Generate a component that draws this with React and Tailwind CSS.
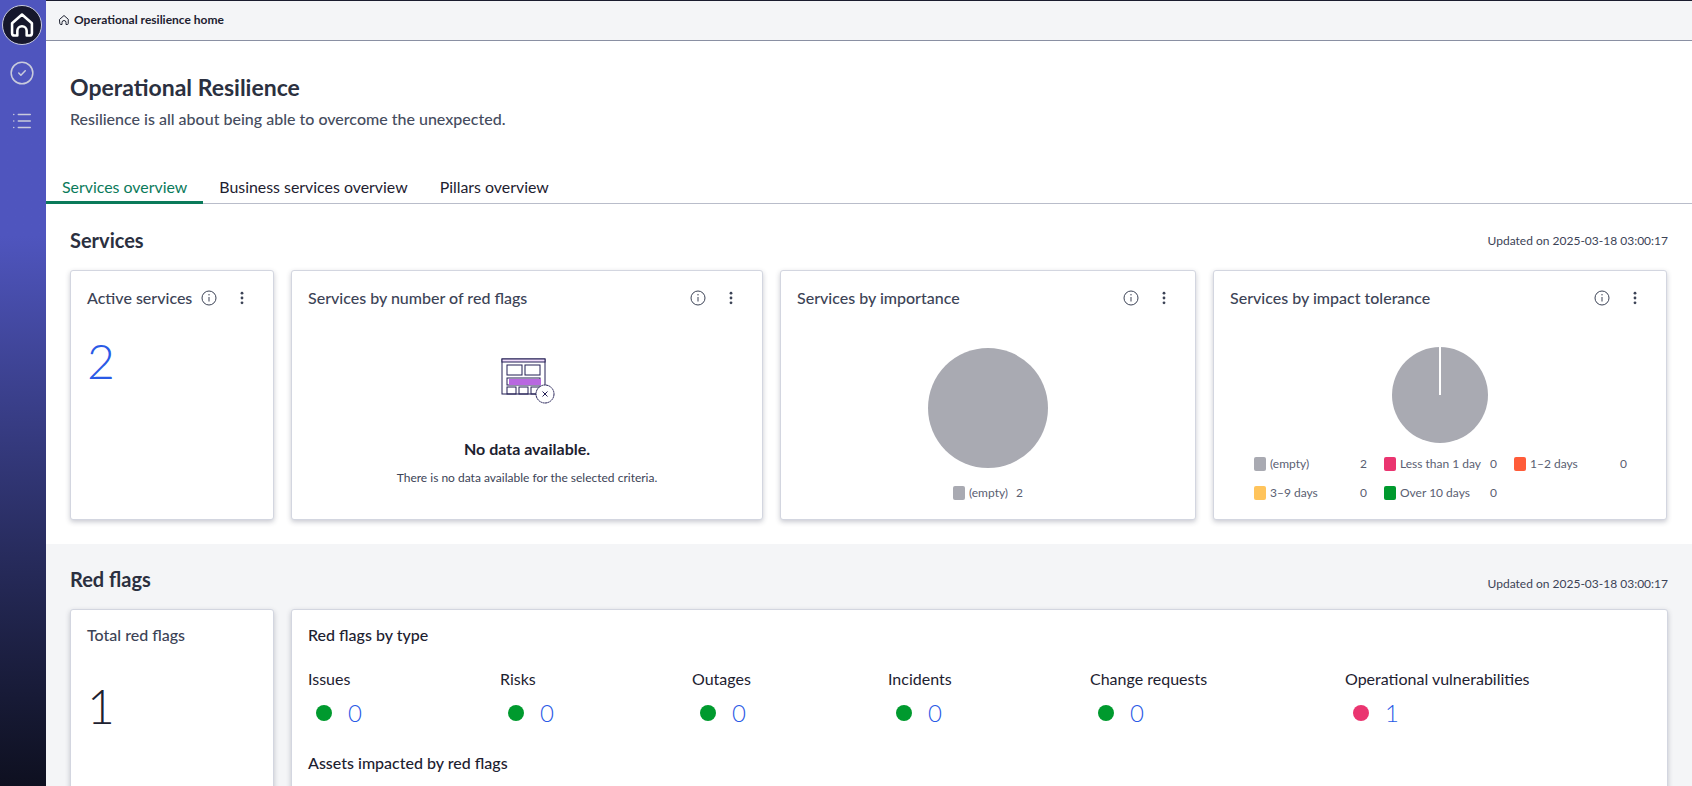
import React from "react";
import { CircleCheck, List } from "lucide-react";

const HomeGlyph = ({ className, strokeWidth = 2 }) => (
  <svg viewBox="0 0 24 24" fill="none" stroke="currentColor" strokeWidth={strokeWidth} strokeLinejoin="round" strokeLinecap="round" className={className}>
    <path d="M3.5 10.5 12 3l8.5 7.5V19a2 2 0 0 1-2 2H16v-4a4 4 0 0 0-8 0v4H5.5a2 2 0 0 1-2-2z" />
  </svg>
);

const InfoIcon = () => (
  <svg viewBox="0 0 16 16" fill="none" className="w-[16px] h-[16px] text-[#3c4356]">
    <circle cx="8" cy="8" r="7" stroke="currentColor" strokeWidth="1" />
    <path d="M8 7v4.5" stroke="currentColor" strokeWidth="1" />
    <circle cx="8" cy="4.8" r="0.7" fill="currentColor" />
  </svg>
);

const Dots = () => (
  <svg viewBox="0 0 4 16" className="w-[4px] h-[14px] text-[#3c4356]" fill="currentColor">
    <circle cx="2" cy="2.5" r="1.6" />
    <circle cx="2" cy="8" r="1.6" />
    <circle cx="2" cy="13.5" r="1.6" />
  </svg>
);

const CardHeader = ({ title }) => (
  <div className="flex items-center h-6 pl-4 pr-[29px]">
    <span className="flex-1 text-[16px] font-medium text-[#3c4356] whitespace-nowrap">{title}</span>
    <InfoIcon />
    <span className="ml-[23px]"><Dots /></span>
  </div>
);

const Card = ({ className, children }) => (
  <div className={`bg-white border border-[#d3d6e0] rounded-[3px] shadow-[0_2px_5px_rgba(40,45,70,0.25)] ${className}`}>
    {children}
  </div>
);

const NoData = () => (
  <svg viewBox="0 0 56 46" className="w-[56px] h-[46px]" fill="none">
    <rect x="1" y="1" width="43" height="35" fill="#fff" stroke="#231f55" strokeWidth="1" />
    <rect x="1" y="1" width="43" height="3" fill="#f0dcfa" stroke="#231f55" strokeWidth="1" />
    <rect x="6" y="7" width="15" height="10" stroke="#231f55" strokeWidth="1" />
    <rect x="24" y="7" width="15" height="10" stroke="#231f55" strokeWidth="1" />
    <rect x="6" y="20" width="33" height="7" stroke="#231f55" strokeWidth="1" />
    <rect x="8" y="21" width="32" height="6" fill="#b868e0" />
    <rect x="6" y="29" width="9" height="7" stroke="#231f55" strokeWidth="1" />
    <rect x="18" y="29" width="9" height="7" stroke="#231f55" strokeWidth="1" />
    <rect x="30" y="29" width="9" height="7" stroke="#231f55" strokeWidth="1" />
    <circle cx="44" cy="36" r="9" fill="#fff" stroke="#231f55" strokeWidth="1" strokeDasharray="2 0.4" />
    <path d="M41.5 33.5l5 5m0-5l-5 5" stroke="#231f55" strokeWidth="1" />
  </svg>
);

const Legend = ({ color, label, value }) => (
  <div className="flex items-center text-[12px] text-[#5a6072]">
    <span className={`w-[12px] h-[14px] rounded-[2px] mr-[4px] ${color}`} />
    <span className="w-[90px] whitespace-nowrap">{label}</span>
    <span>{value}</span>
  </div>
);

const flagTypes = [
  { label: "Issues", value: "0", width: "w-[192px]", dot: "bg-[#009a2e]" },
  { label: "Risks", value: "0", width: "w-[192px]", dot: "bg-[#009a2e]" },
  { label: "Outages", value: "0", width: "w-[196px]", dot: "bg-[#009a2e]" },
  { label: "Incidents", value: "0", width: "w-[202px]", dot: "bg-[#009a2e]" },
  { label: "Change requests", value: "0", width: "w-[255px]", dot: "bg-[#009a2e]" },
  { label: "Operational vulnerabilities", value: "1", width: "w-[240px]", dot: "bg-[#ea3570]" },
];

const SectionHead = ({ title, stampClass }) => (
  <div className="flex items-center justify-between h-7">
    <h2 className="text-[20px] font-bold text-[#2b3040]">{title}</h2>
    <span className={`text-[12px] text-[#3c4356] ${stampClass}`}>Updated on 2025-03-18 03:00:17</span>
  </div>
);

export default function App() {
  return (
    <div className="flex h-screen overflow-hidden bg-white font-['Lato',sans-serif]">
      <aside className="w-[46px] shrink-0 pr-[2px] flex flex-col items-center bg-linear-to-b from-[#4f55be] from-[30%] to-[#0e1020]">
        <div className="mt-[5px] w-10 h-10 shrink-0 rounded-full bg-[#16172c] border border-[#c9cbe0] flex items-center justify-center text-white">
          <HomeGlyph className="w-[28px] h-[28px]" strokeWidth={2.2} />
        </div>
        <CircleCheck className="mt-[15px] w-[26px] h-[26px] text-[#c9cbdc]" strokeWidth={1.4} />
        <List className="mt-[24px] w-[22px] h-[22px] text-[#c9cbdc]" strokeWidth={1.7} />
      </aside>

      <div className="flex-1 min-w-0 flex flex-col">
        <header className="h-[41px] shrink-0 flex items-center pl-[12px] pb-[2px] bg-[#f4f5f7] border-t border-t-[#1a1c2e] border-b border-b-[#8a90a3]">
          <HomeGlyph className="w-[12px] h-[12px] mr-[4px] text-[#1d2130]" strokeWidth={2} />
          <span className="text-[12px] font-bold text-[#1d2130]">Operational resilience home</span>
        </header>

        <div className="px-6 pt-[30px]">
          <h1 className="text-[23px] leading-8 font-bold text-[#2b3040]">Operational Resilience</h1>
          <p className="mt-[4px] text-[16px] leading-6 font-medium text-[#454c5e]">Resilience is all about being able to overcome the unexpected.</p>
        </div>

        <nav className="mt-[44px] flex border-b border-[#b9bdca] h-[29px]">
          <span className="px-4 h-[29px] leading-6 text-[15.9px] text-[#0a7a5a] border-b-[3px] border-[#0a7a5a]">Services overview</span>
          <span className="px-4 leading-6 text-[15.9px] text-[#1d2130]">Business services overview</span>
          <span className="px-4 leading-6 text-[15.9px] text-[#1d2130]">Pillars overview</span>
        </nav>

        <section className="px-6 pt-[22px] pb-[24px]">
          <SectionHead title="Services" stampClass="pt-[2px]" />
          <div className="mt-[16px] flex gap-[17px]">
            <Card className="w-[204px] h-[250px] pt-[15px]">
              <CardHeader title="Active services" />
              <div className="pl-4 mt-[21px] text-[48px] leading-[60px] font-light text-[#2a5ae6]">2</div>
            </Card>

            <Card className="w-[472px] h-[250px] pt-[15px]">
              <CardHeader title="Services by number of red flags" />
              <div className="mt-[48px] flex flex-col items-center">
                <span className="pl-[4px]"><NoData /></span>
                <div className="mt-[33px] text-[16px] font-bold text-[#1d2130]">No data available.</div>
                <div className="mt-[8px] text-[12px] text-[#3c4356]">There is no data available for the selected criteria.</div>
              </div>
            </Card>

            <Card className="w-[416px] h-[250px] pt-[15px]">
              <CardHeader title="Services by importance" />
              <div className="mt-[38px] flex flex-col items-center">
                <svg viewBox="0 0 120 120" className="w-[120px] h-[120px]">
                  <circle cx="60" cy="60" r="60" fill="#a9aab2" />
                </svg>
                <div className="mt-[16px] flex items-center gap-[4px] text-[12px] text-[#5a6072]">
                  <span className="w-[12px] h-[14px] rounded-[2px] bg-[#a9aab2]" />
                  <span>(empty)</span>
                  <span className="ml-[4px]">2</span>
                </div>
              </div>
            </Card>

            <Card className="w-[454px] h-[250px] pt-[15px]">
              <CardHeader title="Services by impact tolerance" />
              <div className="mt-[37px] flex justify-center">
                <svg viewBox="0 0 96 96" className="w-[96px] h-[96px]">
                  <circle cx="48" cy="48" r="48" fill="#a9aab2" />
                  <rect x="47" y="0" width="2" height="48" fill="#fff" />
                </svg>
              </div>
              <div className="mt-[12px] ml-[40px] grid grid-cols-[130px_130px_130px] gap-y-[11px]">
                <Legend color="bg-[#a9aab2]" label="(empty)" value="2" />
                <Legend color="bg-[#ea3570]" label="Less than 1 day" value="0" />
                <Legend color="bg-[#ff5c39]" label="1–2 days" value="0" />
                <Legend color="bg-[#ffc45c]" label="3–9 days" value="0" />
                <Legend color="bg-[#009a2e]" label="Over 10 days" value="0" />
              </div>
            </Card>
          </div>
        </section>

        <section className="flex-1 bg-[#f4f5f7] px-6 pt-[21px]">
          <SectionHead title="Red flags" stampClass="pt-[10px]" />
          <div className="mt-[16px] flex gap-[17px]">
            <Card className="w-[204px] h-[300px] pt-[13px]">
              <div className="pl-4 h-6 text-[16px] font-medium text-[#3c4356]">Total red flags</div>
              <div className="pl-4 mt-[29px] text-[48px] leading-[60px] font-light text-[#1d2130]">1</div>
            </Card>

            <Card className="flex-1 h-[300px] pt-[13px] pl-4">
              <div className="h-6 text-[16px] font-medium text-[#1d2130]">Red flags by type</div>
              <div className="mt-[20px] flex">
                {flagTypes.map((item) => (
                  <div key={item.label} className={`${item.width} shrink-0`}>
                    <div className="h-6 leading-6 text-[16px] text-[#1d2130] whitespace-nowrap">{item.label}</div>
                    <div className="mt-[7px] h-[30px] pl-2 flex items-center">
                      <span className={`w-4 h-4 rounded-full ${item.dot}`} />
                      <span className="ml-4 text-[24px] font-light text-[#2a5ae6]">{item.value}</span>
                    </div>
                  </div>
                ))}
              </div>
              <div className="mt-[23px] h-6 text-[16px] font-medium text-[#1d2130]">Assets impacted by red flags</div>
            </Card>
          </div>
        </section>
      </div>
    </div>
  );
}
